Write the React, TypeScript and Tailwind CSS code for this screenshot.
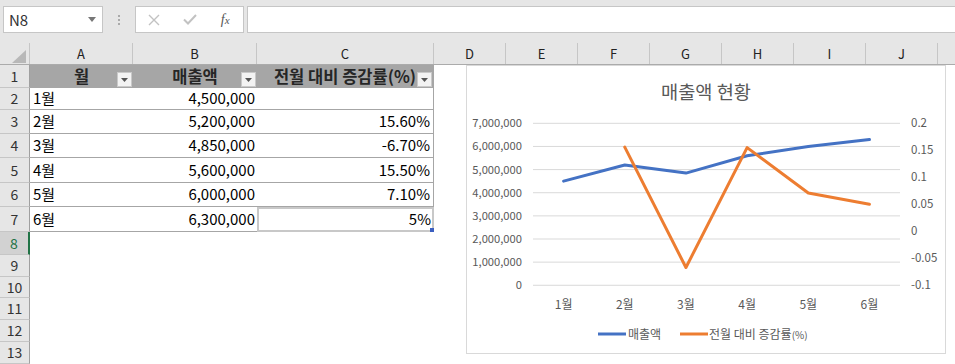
import React from "react";

const COLS = [103, 124, 177, 72, 72, 72, 72, 72, 72, 72, 72];
const LETTERS = ["A", "B", "C", "D", "E", "F", "G", "H", "I", "J", ""];
const ROW_H = [23, 22, 24, 24, 25, 24, 25, 23, 22, 21, 22, 22, 22];

const data: [string, string, string][] = [
  ["1월", "4,500,000", ""],
  ["2월", "5,200,000", "15.60%"],
  ["3월", "4,850,000", "-6.70%"],
  ["4월", "5,600,000", "15.50%"],
  ["5월", "6,000,000", "7.10%"],
  ["6월", "6,300,000", "5%"],
];

const FONT = { fontFamily: '"Noto Sans CJK KR", "Noto Sans", sans-serif' };

function FilterBtn() {
  return (
    <div className="absolute right-[1px] bottom-[1px] w-[15px] h-[15px] bg-[#f3f3f3] border border-[#c9c9c9] flex items-center justify-center">
      <svg width="7" height="4" viewBox="0 0 7 4">
        <path d="M0 0H7L3.5 4Z" fill="#555" />
      </svg>
    </div>
  );
}

function Chart() {
  const gx1 = 67;
  const gx2 = 434;
  const top = 58.3;
  const step = 23.14;
  const rstep = 27;
  const cx = (i: number) => 97.6 + i * 61.17;
  const blue = [4.5, 5.2, 4.85, 5.6, 6.0, 6.3];
  const orange = [0.156, -0.067, 0.155, 0.071, 0.05];
  const by = (v: number) => 220.3 - v * step;
  const oy = (r: number) => 166.3 - r * 540;
  const left = ["7,000,000", "6,000,000", "5,000,000", "4,000,000", "3,000,000", "2,000,000", "1,000,000", "0"];
  const right = ["0.2", "0.15", "0.1", "0.05", "0", "-0.05", "-0.1"];
  return (
    <div className="absolute left-[466px] top-[65px] w-[480px] h-[289px] border border-[#d9d9d9] bg-white">
      <svg width="480" height="289" className="absolute left-[-1px] top-[-1px]" style={FONT}>
        <text x="240" y="33.5" textAnchor="middle" fontSize="18.67" fill="#595959">
          매출액 현황
        </text>
        {left.map((l, k) => (
          <g key={l}>
            <line x1={gx1} x2={gx2} y1={top + k * step} y2={top + k * step} stroke="#d9d9d9" strokeWidth="1" />
            <text x="56" y={top + k * step + 4} textAnchor="end" fontSize="11.2" fill="#595959">
              {l}
            </text>
          </g>
        ))}
        {right.map((l, k) => (
          <text key={l} x="445" y={top + k * rstep + 4} fontSize="11.5" fill="#595959">
            {l}
          </text>
        ))}
        {["1월", "2월", "3월", "4월", "5월", "6월"].map((m, i) => (
          <text key={m} x={cx(i)} y="243.5" textAnchor="middle" fontSize="12" fill="#595959">
            {m}
          </text>
        ))}
        <polyline
          points={blue.map((v, i) => `${cx(i)},${by(v)}`).join(" ")}
          fill="none"
          stroke="#4472c4"
          strokeWidth="3"
          strokeLinecap="round"
          strokeLinejoin="round"
        />
        <polyline
          points={orange.map((r, i) => `${cx(i + 1)},${oy(r)}`).join(" ")}
          fill="none"
          stroke="#ed7d31"
          strokeWidth="3"
          strokeLinecap="round"
          strokeLinejoin="round"
        />
        <line x1="132" x2="160" y1="269" y2="269" stroke="#4472c4" strokeWidth="3" />
        <text x="162" y="273.5" fontSize="12" fill="#595959">
          매출액
        </text>
        <line x1="214" x2="242" y1="269" y2="269" stroke="#ed7d31" strokeWidth="3" />
        <text x="243" y="273.5" fontSize="12" fill="#595959">
          전월 대비 증감률<tspan fontSize="10">(%)</tspan>
        </text>
      </svg>
    </div>
  );
}

export default function App() {
  return (
    <div className="relative w-[955px] h-[364px] overflow-hidden bg-white" style={FONT}>
      {/* formula bar */}
      <div className="h-[43px] bg-[#e6e6e6] flex items-start pt-[6px] pl-[3px]">
        <div className="w-[100px] h-[27px] bg-white border border-[#c6c6c6] flex items-center justify-between pl-[5px] pr-[6px]">
          <span className="text-[15px] text-[#333] leading-none">N8</span>
          <svg width="8" height="5" viewBox="0 0 8 5">
            <path d="M0 0H8L4 5Z" fill="#777" />
          </svg>
        </div>
        <div className="w-[32px] h-[27px] flex flex-col items-center justify-center gap-[2px]">
          <div className="w-[2px] h-[2px] bg-[#aaa]" />
          <div className="w-[2px] h-[2px] bg-[#aaa]" />
          <div className="w-[2px] h-[2px] bg-[#aaa]" />
        </div>
        <div className="w-[109px] h-[27px] bg-white border border-[#c6c6c6] flex items-center">
          <div className="w-[36px] flex justify-center">
            <svg width="12" height="12" viewBox="0 0 12 12">
              <path d="M1 1L11 11M11 1L1 11" stroke="#c2c2c2" strokeWidth="1.4" />
            </svg>
          </div>
          <div className="w-[36px] flex justify-center">
            <svg width="14" height="11" viewBox="0 0 14 11">
              <path d="M1 5.5L5 9.5L13 1" stroke="#c2c2c2" strokeWidth="2" fill="none" />
            </svg>
          </div>
          <div className="w-[36px] flex justify-center">
            <span className="text-[14px] italic text-[#555] leading-none" style={{ fontFamily: '"Liberation Serif", serif' }}>
              f<span className="text-[11px]">x</span>
            </span>
          </div>
        </div>
        <div className="ml-[3px] flex-1 h-[27px] bg-white border border-[#c6c6c6] border-r-0" />
      </div>

      {/* column header */}
      <div className="flex h-[22px] bg-[#e6e6e6] border-b border-[#ababab]">
        <div className="w-[30px] shrink-0 h-full border-r border-[#c6c6c6] relative">
          <svg width="14" height="13" viewBox="0 0 14 13" className="absolute right-[3px] bottom-[1px]">
            <path d="M14 0V13H0Z" fill="#b8b8b8" />
          </svg>
        </div>
        {COLS.map((w, i) => (
          <div
            key={i}
            className="shrink-0 h-full border-r border-[#c6c6c6] flex items-center justify-center text-[13px] text-[#222]"
            style={{ width: w }}
          >
            {LETTERS[i]}
          </div>
        ))}
      </div>

      {/* rows */}
      {ROW_H.map((h, r) => {
        const rowNo = r + 1;
        const selected = rowNo === 8;
        return (
          <div key={r} className="flex" style={{ height: h }}>
            <div
              className={
                selected
                  ? "w-[30px] shrink-0 h-full bg-[#d2d2d2] border-b border-[#c6c6c6] border-r-2 border-r-[#217346] flex items-center justify-center text-[14px] text-[#217346]"
                  : "w-[30px] shrink-0 h-full bg-[#e6e6e6] border-b border-[#c6c6c6] border-r border-r-[#a0a0a0] flex items-center justify-center text-[14px] text-[#333]"
              }
            >
              {rowNo}
            </div>
            {rowNo === 1 ? (
              <>
                {["월", "매출액", "전월 대비 증감률(%)"].map((t, i) => (
                  <div
                    key={t}
                    className={
                      "relative shrink-0 h-full bg-[#a6a6a6] flex items-center justify-center text-[16.5px] font-bold text-[#262626] " +
                      (i === 2 ? "border-r border-[#a6a6a6]" : "")
                    }
                    style={{ width: COLS[i] }}
                  >
                    {t}
                    <FilterBtn />
                  </div>
                ))}
              </>
            ) : rowNo <= 7 ? (
              <>
                <div
                  className="shrink-0 h-full border-b border-[#a6a6a6] flex items-center pl-[3px] text-[15px] text-black"
                  style={{ width: COLS[0] }}
                >
                  {data[r - 1][0]}
                </div>
                <div
                  className="shrink-0 h-full border-b border-[#a6a6a6] flex items-center justify-end pr-[2px] text-[15px] text-black"
                  style={{ width: COLS[1] }}
                >
                  {data[r - 1][1]}
                </div>
                <div
                  className={
                    rowNo === 7
                      ? "relative shrink-0 h-full border-2 border-[#c8c8c8] flex items-center justify-end pr-[1px] text-[15px] text-black"
                      : "shrink-0 h-full border-b border-r border-[#a6a6a6] flex items-center justify-end pr-[3px] text-[15px] text-black"
                  }
                  style={{ width: COLS[2] }}
                >
                  {data[r - 1][2]}
                  {rowNo === 7 && (
                    <div className="absolute right-[-2px] bottom-[-2px] w-[4px] h-[4px] bg-[#3b5fc0]" />
                  )}
                </div>
              </>
            ) : null}
          </div>
        );
      })}

      <Chart />
    </div>
  );
}
